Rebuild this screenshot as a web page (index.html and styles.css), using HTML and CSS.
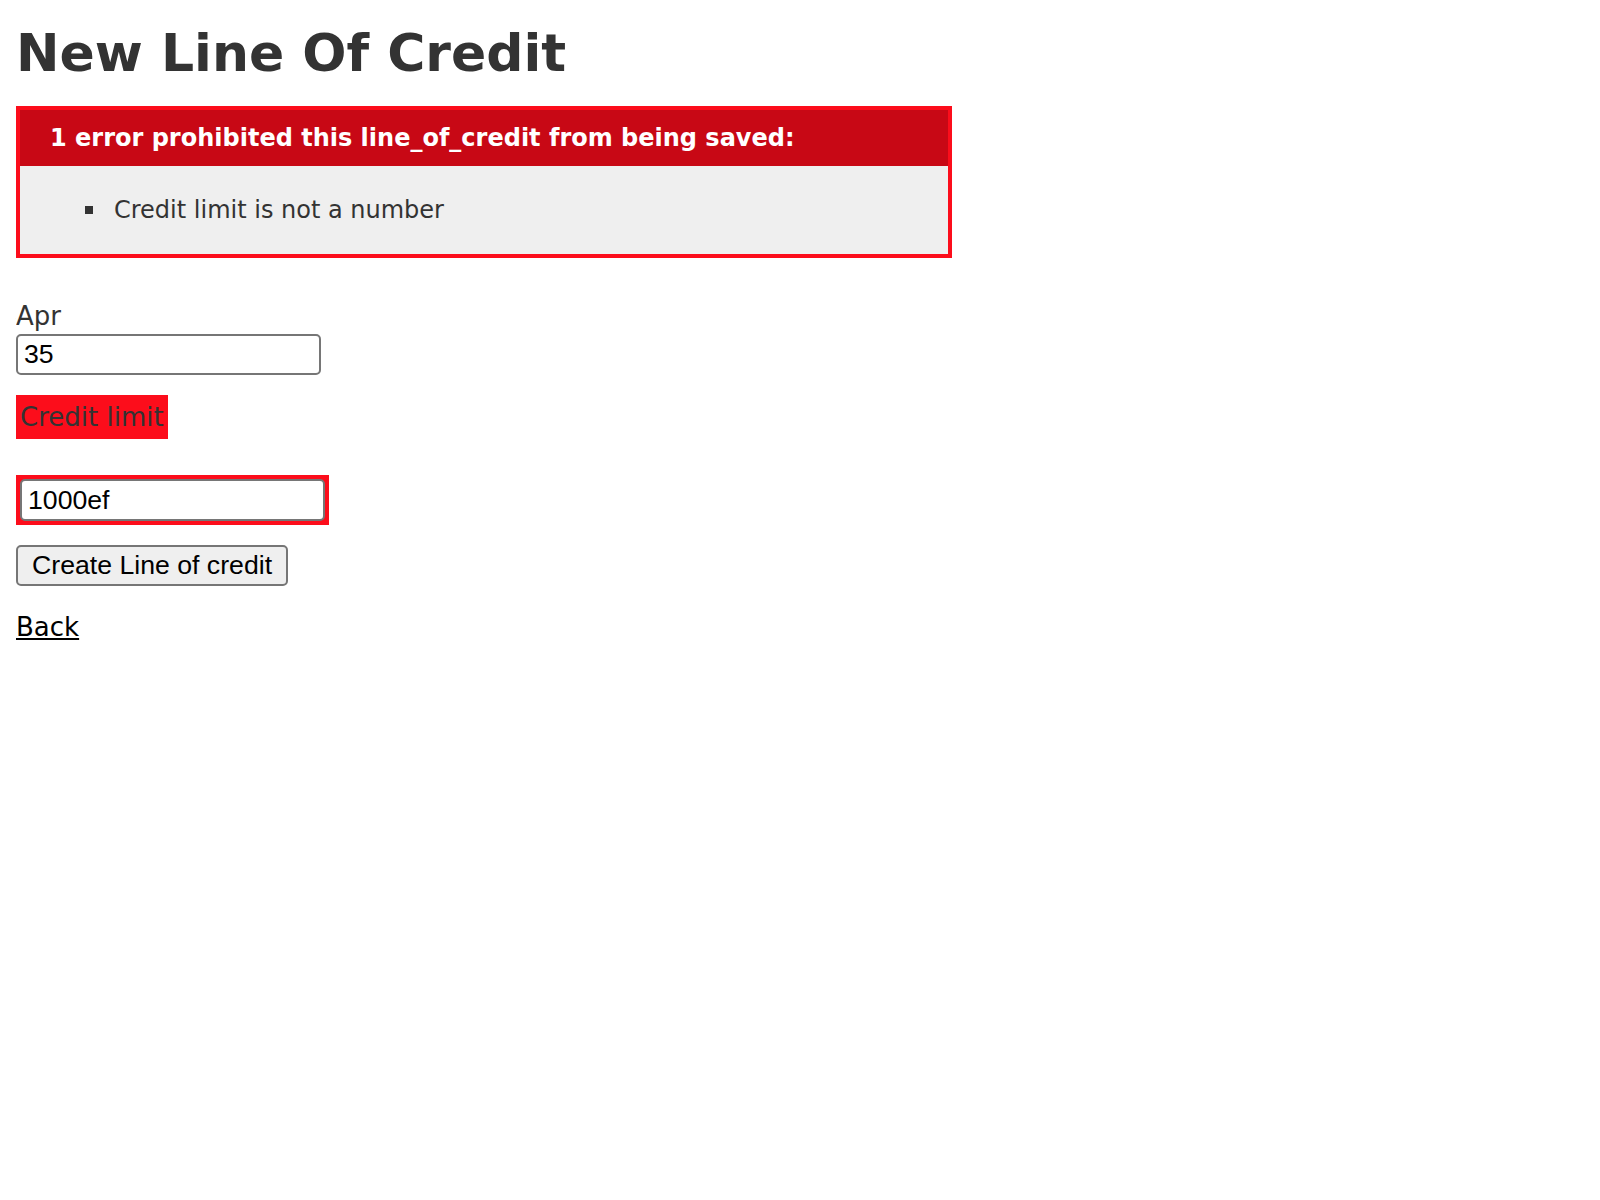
FILE: index.html
```html
<!DOCTYPE html>
<html>
<head>
<meta charset="utf-8">
<title>New Line Of Credit</title>
<link rel="stylesheet" href="styles.css">
</head>
<body>
<h1 class="title">New Line Of Credit</h1>
<form class="form">
  <div class="error-explanation">
    <h2 class="error-title">1 error prohibited this line_of_credit from being saved:</h2>
    <ul class="error-list">
      <li>Credit limit is not a number</li>
    </ul>
  </div>
  <div class="field">
    <label class="label" for="apr">Apr</label><br>
    <input class="input" id="apr" type="text" value="35">
  </div>
  <div class="field">
    <div class="field-with-errors"><label class="label" for="limit">Credit limit</label></div>
    <br>
    <div class="field-with-errors"><input class="input" id="limit" type="text" value="1000ef"></div>
  </div>
  <div class="actions">
    <button class="button" type="button">Create Line of credit</button>
  </div>
</form>
<a class="back" href="#">Back</a>
</body>
</html>
```
FILE: styles.css
```css
html, body {
  background: #fff;
}
body {
  margin: 16px;
  color: #333;
  font-family: "DejaVu Sans", Verdana, sans-serif;
  font-size: 26px;
  line-height: 36px;
}
.title {
  font-size: 52px;
  line-height: 62px;
  font-weight: bold;
  margin: 6px 0 22px;
}
.form {
  margin: 0;
}
.error-explanation {
  width: 900px;
  border: 4px solid #fc0d1b;
  padding: 14px 14px 0;
  margin-bottom: 40px;
  background: #efefef;
}
.error-title {
  margin: -14px -14px 0;
  padding: 10px 10px 10px 30px;
  font-size: 24px;
  line-height: 36px;
  font-weight: bold;
  color: #fff;
  background: #c80815;
}
.error-list {
  margin: 26px 0 26px;
  padding-left: 80px;
  list-style: none;
}
.error-list li {
  font-size: 24px;
}
.error-list li::before {
  content: "";
  display: inline-block;
  width: 8px;
  height: 8px;
  margin-left: -29px;
  margin-right: 21px;
  vertical-align: 4px;
  background: #333;
}
.field {
  margin-bottom: 20px;
}
.actions {
  margin-bottom: 23px;
}
.label {
  color: #333;
}
.input {
  box-sizing: border-box;
  width: 305px;
  height: 41px;
  margin: 0;
  padding: 0 6px;
  border: 2px solid #767676;
  border-radius: 5px;
  font-family: "Liberation Sans", Arial, sans-serif;
  font-size: 26.67px;
  color: #000;
  background: #fff;
}
.field-with-errors {
  display: table;
  padding: 4px;
  background: #fc0d1b;
}
.field-with-errors .input {
  height: 42px;
}
.button {
  box-sizing: border-box;
  height: 41px;
  margin: 0;
  padding: 0 14px;
  border: 2px solid #767676;
  border-radius: 5px;
  background: #efefef;
  color: #000;
  font-family: "Liberation Sans", Arial, sans-serif;
  font-size: 26.67px;
}
.back {
  color: #000;
}
```
